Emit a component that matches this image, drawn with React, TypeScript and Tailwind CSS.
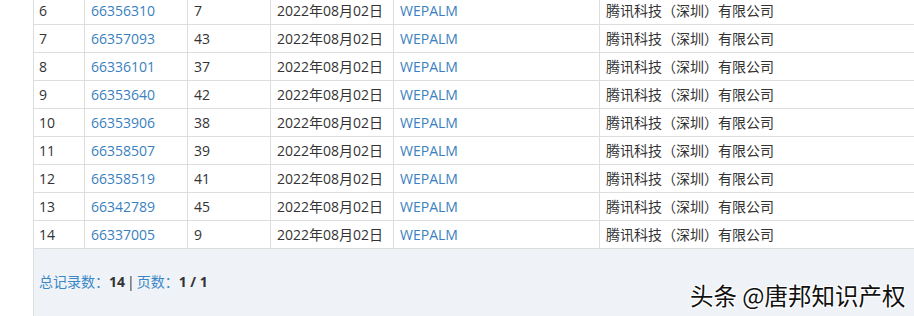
import React from "react";

const rows = [
  ["6", "66356310", "7"],
  ["7", "66357093", "43"],
  ["8", "66336101", "37"],
  ["9", "66353640", "42"],
  ["10", "66353906", "38"],
  ["11", "66358507", "39"],
  ["12", "66358519", "41"],
  ["13", "66342789", "45"],
  ["14", "66337005", "9"],
];

export default function App() {
  return (
    <div
      className="relative w-[914px] h-[316px] overflow-hidden bg-white text-[14px] text-[#333]"
      style={{ fontFamily: '"Open Sans", "Noto Sans CJK SC", sans-serif' }}
    >
      <div className="ml-[33px] w-[1000px] mt-[-4px]">
        <table className="border-collapse w-full table-fixed">
          <colgroup>
            <col className="w-[51px]" />
            <col className="w-[103px]" />
            <col className="w-[83px]" />
            <col className="w-[123px]" />
            <col className="w-[206px]" />
            <col />
          </colgroup>
          <tbody>
            {rows.map((r) => (
              <tr key={r[0]} className="h-[28px]">
                <td className="border border-[#dddddd] pl-[5px] leading-[19px] p-0">{r[0]}</td>
                <td className="border border-[#dddddd] pl-[6px] text-[#3a7fc0] p-0">{r[1]}</td>
                <td className="border border-[#dddddd] pl-[6px] p-0">{r[2]}</td>
                <td className="border border-[#dddddd] pl-[6px] p-0">2022年08月02日</td>
                <td className="border border-[#dddddd] pl-[6px] text-[#3a7fc0] p-0">WEPALM</td>
                <td className="border border-[#dddddd] pl-[6px] p-0">腾讯科技（深圳）有限公司</td>
              </tr>
            ))}
          </tbody>
        </table>
        <div className="h-[80px] bg-[#eff3f7] border-l border-[#dddddd] pl-[5px] pt-[22px] text-[14px]">
          <span className="text-[#3a87c8]">总记录数：</span>
          <span className="font-bold text-[#333]">14</span>
          <span className="text-[#333] mx-[2px]">|</span>
          <span className="text-[#3a87c8]">页数：</span>
          <span className="font-bold text-[#333]">1 / 1</span>
        </div>
      </div>
      <div
        className="absolute left-[690px] top-[280px] text-[23.5px] leading-[30px] text-[#111] whitespace-nowrap"
        style={{
          fontFamily: '"Noto Sans CJK SC", sans-serif',
          textShadow: "1px 1px 0 #fff, -1px -1px 0 #fff, 1px -1px 0 #fff, -1px 1px 0 #fff",
        }}
      >
        头条 @唐邦知识产权
      </div>
    </div>
  );
}
